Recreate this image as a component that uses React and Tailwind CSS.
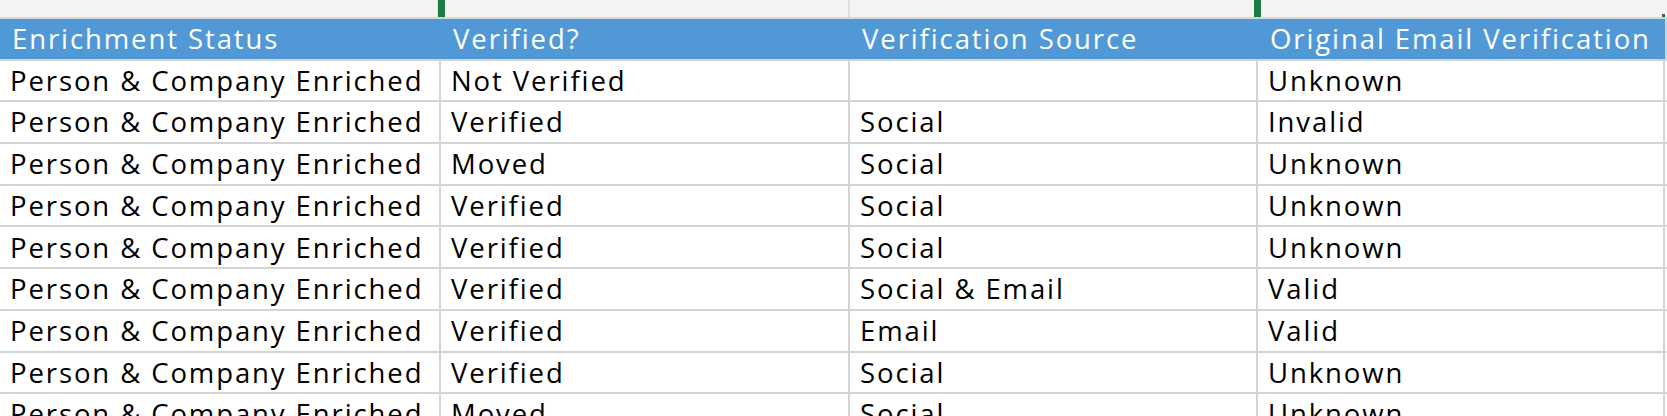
import React from 'react';

const columns = [
    { key: 'status', label: 'Enrichment Status', width: 'w-[441px]' },
    { key: 'verified', label: 'Verified?', width: 'w-[409px]' },
    { key: 'source', label: 'Verification Source', width: 'w-[408px]' },
    { key: 'original', label: 'Original Email Verification', width: 'w-[407px]' },
];

const rows = [
    ['Person & Company Enriched', 'Not Verified', '', 'Unknown'],
    ['Person & Company Enriched', 'Verified', 'Social', 'Invalid'],
    ['Person & Company Enriched', 'Moved', 'Social', 'Unknown'],
    ['Person & Company Enriched', 'Verified', 'Social', 'Unknown'],
    ['Person & Company Enriched', 'Verified', 'Social', 'Unknown'],
    ['Person & Company Enriched', 'Verified', 'Social & Email', 'Valid'],
    ['Person & Company Enriched', 'Verified', 'Email', 'Valid'],
    ['Person & Company Enriched', 'Verified', 'Social', 'Unknown'],
    ['Person & Company Enriched', 'Moved', 'Social', 'Unknown'],
];

const App = () => {
    return (
        <div className="w-[1667px] h-[416px] overflow-hidden bg-white font-['Open_Sans','Liberation_Sans',sans-serif] font-medium text-[27.5px] tracking-[1.9px]">
            {/* Sheet row above the table */}
            <div className="flex h-[19px] bg-[#f3f3f3] border-b-2 border-[#d6d6d6]">
                <div className="w-[438px] border-r border-[#e0e0e0]" />
                <div className="w-[7px] bg-[#1d7a45]" />
                <div className="w-[405px] border-r-2 border-[#dcdcdc]" />
                <div className="w-[404px]" />
                <div className="w-[7px] bg-[#1d7a45]" />
                <div className="w-[404px] relative">
                    <div className="absolute right-0 bottom-0 w-[3px] h-[3px] bg-[#1d7a45]" />
                </div>
            </div>

            {/* Header */}
            <div className="flex h-[41.7px] border-b-2 border-[#d4d4d4]">
                {columns.map((col) => (
                    <div
                        key={col.key}
                        className={`${col.width} bg-[#5199d6] text-white flex items-center pl-[12px] leading-none`}
                    >
                        {col.label}
                    </div>
                ))}
                <div className="flex-1 border-l-2 border-[#d4d4d4]" />
            </div>

            {/* Data rows */}
            {rows.map((row, i) => (
                <div key={i} className="flex h-[41.7px] border-b-2 border-[#d4d4d4]">
                    {row.map((cell, j) => (
                        <div
                            key={j}
                            className={`${columns[j].width} border-r-2 border-[#d4d4d4] text-black flex items-center pl-[10px] leading-none`}
                        >
                            {cell}
                        </div>
                    ))}
                </div>
            ))}
        </div>
    );
};

export default App;
